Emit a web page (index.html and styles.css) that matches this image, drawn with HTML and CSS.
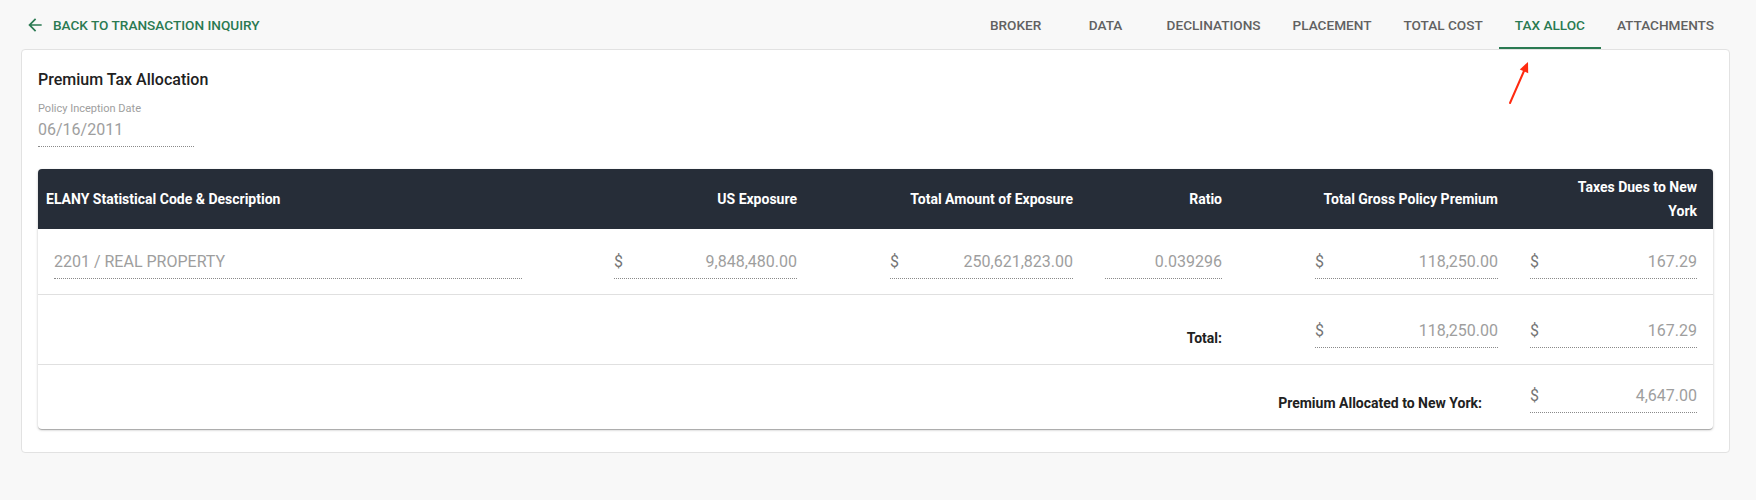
FILE: index.html
```html
<!DOCTYPE html>
<html lang="en">
<head>
<meta charset="utf-8">
<title>Premium Tax Allocation</title>
<link rel="stylesheet" href="styles.css">
</head>
<body>
<header class="topbar">
  <a class="back" href="#">
    <svg class="back-icon" viewBox="0 0 24 24" width="20" height="20"><path d="M20 11H7.83l5.59-5.59L12 4l-8 8 8 8 1.41-1.41L7.83 13H20v-2z" fill="currentColor"/></svg>
    <span>BACK TO TRANSACTION INQUIRY</span>
  </a>
  <nav class="tabs">
    <a class="tab" href="#">BROKER</a>
    <a class="tab" href="#">DATA</a>
    <a class="tab" href="#">DECLINATIONS</a>
    <a class="tab" href="#">PLACEMENT</a>
    <a class="tab" href="#">TOTAL COST</a>
    <a class="tab tab-active" href="#">TAX ALLOC</a>
    <a class="tab" href="#">ATTACHMENTS</a>
  </nav>
</header>

<main class="card">
  <h1 class="title">Premium Tax Allocation</h1>
  <div class="date-label">Policy Inception Date</div>
  <div class="field date-field"><span class="val">06/16/2011</span></div>

  <section class="table">
    <div class="row head">
      <div class="cell left">ELANY Statistical Code &amp; Description</div>
      <div class="cell">US Exposure</div>
      <div class="cell">Total Amount of Exposure</div>
      <div class="cell">Ratio</div>
      <div class="cell">Total Gross Policy Premium</div>
      <div class="cell">Taxes Dues to New<br>York</div>
    </div>
    <div class="row body r1">
      <div class="cell"><div class="field wide"><span class="val">2201 / REAL PROPERTY</span></div></div>
      <div class="cell"><div class="field money"><span class="cur">$</span><span class="val">9,848,480.00</span></div></div>
      <div class="cell"><div class="field money"><span class="cur">$</span><span class="val">250,621,823.00</span></div></div>
      <div class="cell"><div class="field ratio"><span class="val">0.039296</span></div></div>
      <div class="cell"><div class="field money"><span class="cur">$</span><span class="val">118,250.00</span></div></div>
      <div class="cell"><div class="field full"><span class="cur">$</span><span class="val">167.29</span></div></div>
    </div>
    <div class="row body r2">
      <div class="cell label span4">Total:</div>
      <div class="cell"><div class="field money"><span class="cur">$</span><span class="val">118,250.00</span></div></div>
      <div class="cell"><div class="field full"><span class="cur">$</span><span class="val">167.29</span></div></div>
    </div>
    <div class="row body r3">
      <div class="cell label span5">Premium Allocated to New York:</div>
      <div class="cell"><div class="field full"><span class="cur">$</span><span class="val">4,647.00</span></div></div>
    </div>
  </section>
</main>

<svg class="annotation" width="40" height="56" viewBox="0 0 40 56">
  <line x1="10" y1="48" x2="24" y2="16" stroke="#ff2a10" stroke-width="2" stroke-linecap="round"/>
  <polygon points="28,7 28.2,18.2 19.8,14.4" fill="#ff2a10"/>
</svg>
</body>
</html>
```

FILE: styles.css
```css
* { box-sizing: border-box; }

body {
  margin: 0;
  background: #f8f8f8;
  font-family: Roboto, "Noto Sans", Arial, sans-serif;
  color: #212121;
  position: relative;
  min-height: 500px;
}

.topbar {
  display: flex;
  justify-content: space-between;
  align-items: center;
  height: 49px;
  padding: 0 26px 0 25px;
}

.back {
  display: flex;
  align-items: center;
  gap: 8px;
  color: #2a7a52;
  text-decoration: none;
  font-size: 13.6px;
  font-weight: 500;
}

.back-icon { display: block; }

.tabs {
  display: flex;
  height: 49px;
}

.tab {
  min-width: 90px;
  padding: 1px 16px 0;
  display: flex;
  align-items: center;
  justify-content: center;
  color: #616161;
  text-decoration: none;
  font-size: 13.6px;
  font-weight: 500;
}

.tab-active {
  color: #2a7a52;
  box-shadow: inset 0 -2px 0 #2a7a52;
}

.card {
  margin: 0 26px 0 21px;
  background: #fff;
  border: 1px solid #e2e2e2;
  border-radius: 4px;
  padding: 16px 16px 23px;
}

.title {
  margin: 0;
  font-size: 16px;
  font-weight: 500;
  line-height: 28px;
  color: #212121;
}

.date-label {
  margin-top: 7px;
  font-size: 11px;
  line-height: 16px;
  color: #9e9e9e;
}

.field {
  display: flex;
  justify-content: space-between;
  font-size: 16px;
  line-height: 24px;
  padding-bottom: 4px;
  border-bottom: 1px dotted #8a8a8a;
  color: #9e9e9e;
}

.date-field { width: 156px; margin-top: 1px; }

.cur { color: #757575; }

.table {
  margin-top: 22px;
  border-radius: 4px;
  overflow: hidden;
  box-shadow: 0 1px 3px rgba(0,0,0,0.2), 0 1px 1px rgba(0,0,0,0.14), 0 2px 1px -1px rgba(0,0,0,0.12);
}

.row {
  display: grid;
  grid-template-columns: 500px 275px 276px 149px 276px 1fr;
}

.cell {
  padding: 0 16px;
  display: flex;
  justify-content: flex-end;
}

.head {
  background: #262d38;
  color: #fff;
  font-size: 14px;
  font-weight: 700;
  line-height: 24px;
  min-height: 60px;
  align-items: center;
  padding: 6px 0;
}

.head .cell { text-align: right; }
.head .left { justify-content: flex-start; text-align: left; padding-left: 8px; }

.body {
  border-bottom: 1px solid #e0e0e0;
  align-items: end;
}

.body:last-child { border-bottom: 0; }

.r1 { padding: 21px 0 15px; }
.r2 { padding: 24px 0 16px; }
.r3 { padding: 19px 0 16px; }

.wide { width: 468px; margin-right: auto; }
.money { width: 183px; }
.ratio { width: 100%; justify-content: flex-end; }
.full { width: 100%; }

.label {
  font-size: 14px;
  font-weight: 700;
  line-height: 20px;
  color: #212121;
}

.span4 { grid-column: 1 / 5; }
.span5 { grid-column: 1 / 6; padding-right: 32px; }

.annotation {
  position: absolute;
  left: 1500px;
  top: 55px;
}
```
